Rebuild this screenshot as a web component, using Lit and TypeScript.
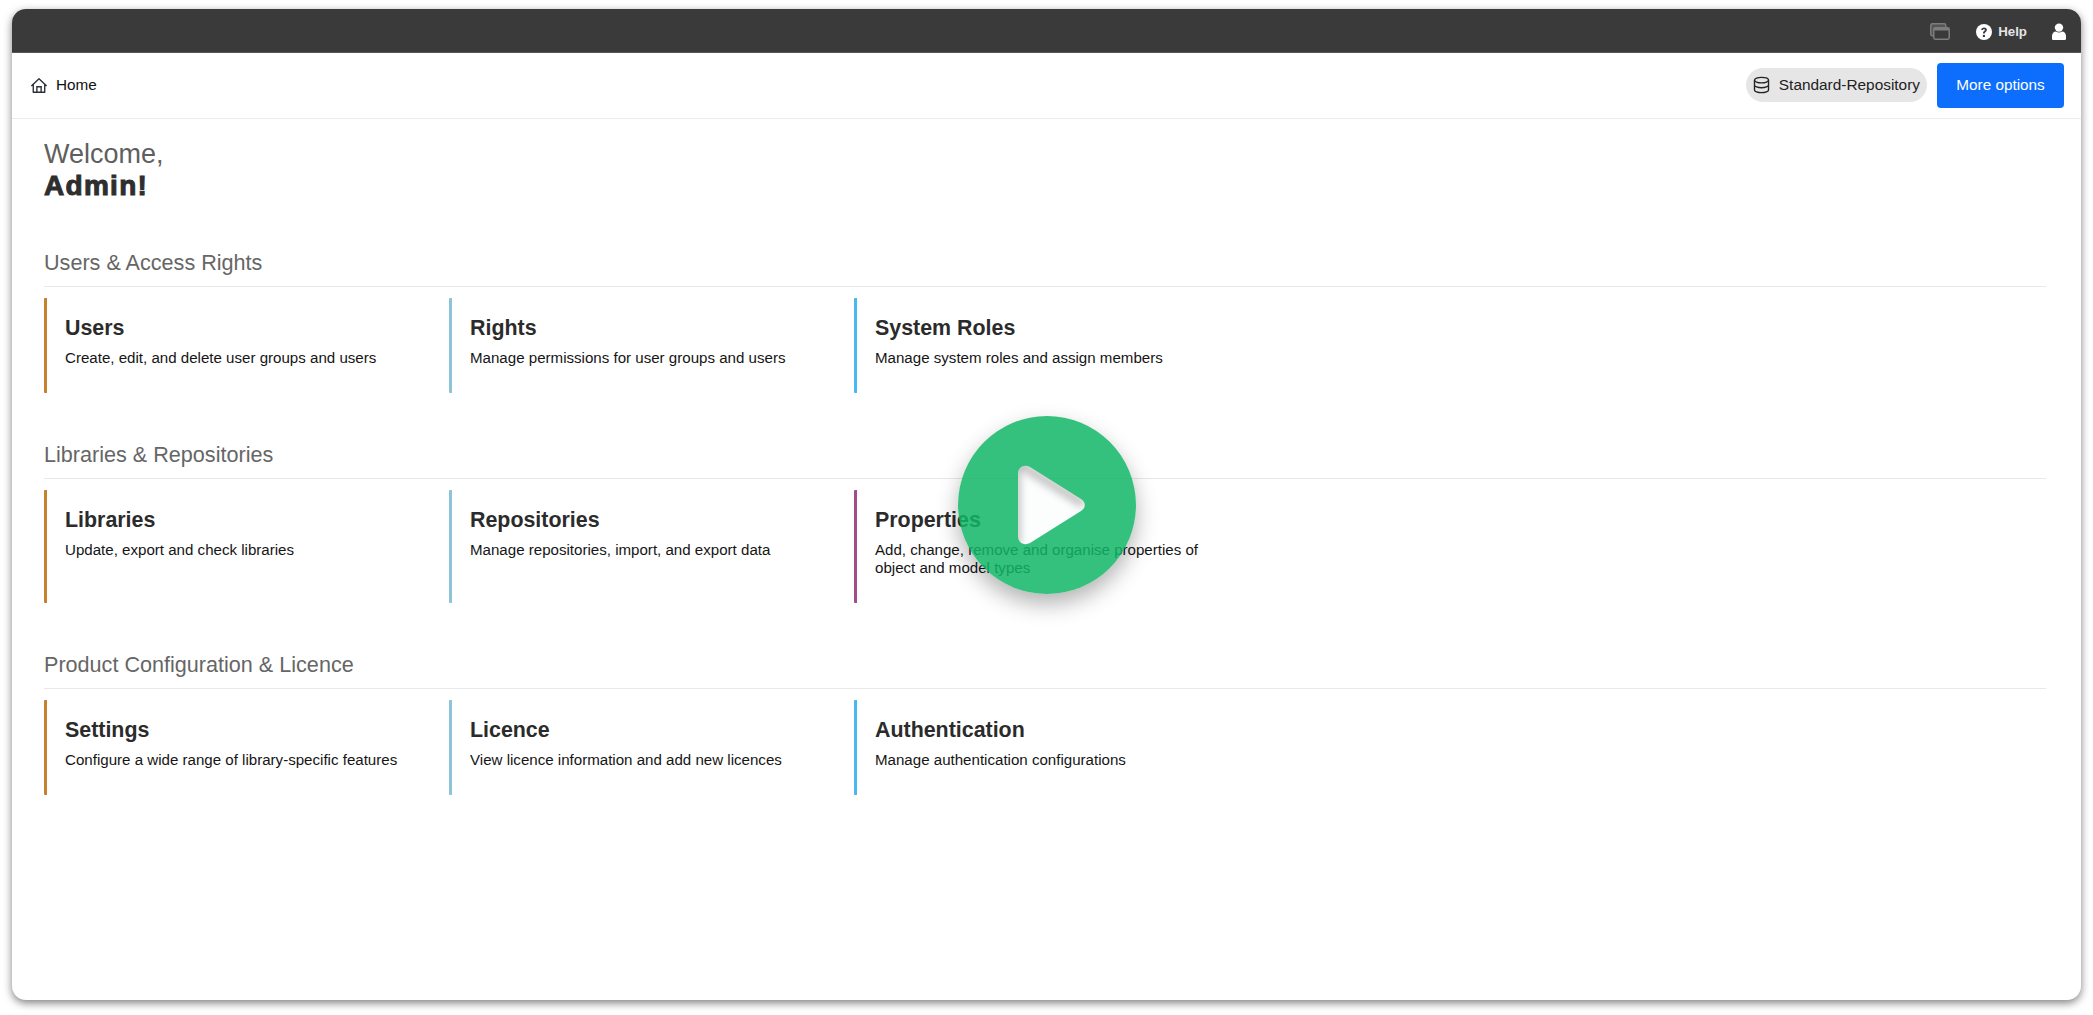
import { LitElement, css, html, svg } from 'lit';
import { customElement } from 'lit/decorators.js';

type Card = { title: string; text: string; color: string };
type Section = { heading: string; cards: Card[] };

const ORANGE = '#c6812f';
const TEAL = '#8cc6d6';
const BLUE = '#48b8f5';
const PURPLE = '#a34c8c';

const sections: Section[] = [
  {
    heading: 'Users & Access Rights',
    cards: [
      { title: 'Users', text: 'Create, edit, and delete user groups and users', color: ORANGE },
      { title: 'Rights', text: 'Manage permissions for user groups and users', color: TEAL },
      { title: 'System Roles', text: 'Manage system roles and assign members', color: BLUE },
    ],
  },
  {
    heading: 'Libraries & Repositories',
    cards: [
      { title: 'Libraries', text: 'Update, export and check libraries', color: ORANGE },
      { title: 'Repositories', text: 'Manage repositories, import, and export data', color: TEAL },
      { title: 'Properties', text: 'Add, change, remove and organise properties of object and model types', color: PURPLE },
    ],
  },
  {
    heading: 'Product Configuration & Licence',
    cards: [
      { title: 'Settings', text: 'Configure a wide range of library-specific features', color: ORANGE },
      { title: 'Licence', text: 'View licence information and add new licences', color: TEAL },
      { title: 'Authentication', text: 'Manage authentication configurations', color: BLUE },
    ],
  },
];

const homeIcon = svg`<path d="M.8 8.4 8 1.6l7.2 6.8M2.6 7v7.4h10.8V7" fill="none" stroke="currentColor" stroke-width="1.3" stroke-linejoin="round"/><path d="M6 14.4V9.2h4v5.2" fill="none" stroke="currentColor" stroke-width="1.3"/>`;
const dbIcon = svg`<ellipse cx="8" cy="3.4" rx="6.6" ry="2.6" fill="none" stroke="currentColor" stroke-width="1.3"/><path d="M1.4 3.4v9.2c0 1.4 3 2.6 6.6 2.6s6.6-1.2 6.6-2.6V3.4M1.4 8c0 1.4 3 2.6 6.6 2.6s6.6-1.2 6.6-2.6" fill="none" stroke="currentColor" stroke-width="1.3"/>`;
const windowsIcon = svg`<rect x=".8" y=".8" width="15" height="12" rx="1.6" fill="#555" stroke="currentColor" stroke-width="1.5"/><rect x="3.8" y="4.8" width="15.4" height="11.4" rx="1.4" fill="#3a3a3a" stroke="currentColor" stroke-width="1.5"/><path d="M4 5h15v2.4H4z" fill="currentColor"/>`;
const helpIcon = svg`<circle cx="8" cy="8" r="8" fill="currentColor"/><path d="M5.2 6.1c0-1.7 1.3-2.7 2.9-2.7s2.8 1 2.8 2.4c0 2-2.1 2-2.1 3.6H7c0-2.5 1.8-2.4 1.8-3.5 0-.5-.3-.8-.8-.8-.6 0-.9.4-.9 1Z" fill="#3a3a3a"/><circle cx="7.9" cy="11.9" r="1.2" fill="#3a3a3a"/>`;
const userIcon = svg`<circle cx="7" cy="4.6" r="4.2" fill="currentColor"/><path d="M0 15.4v-2.6C0 10.4 1.8 8.4 4 8.4c.9.6 1.9 1 3 1s2.1-.4 3-1c2.2 0 4 2 4 4.4v2.6c0 .9-.7 1.6-1.6 1.6H1.6C.7 17 0 16.3 0 15.4Z" fill="currentColor"/>`;

@customElement('app-root')
export class AppRoot extends LitElement {
  static styles = css`
    :host {
      display: block;
      box-sizing: border-box;
      height: 1015px;
      padding: 9px 12px 15px;
      background: #fff;
      font-family: 'Liberation Sans', Arial, sans-serif;
      position: relative;
      overflow: hidden;
    }

    .window {
      height: 100%;
      border-radius: 14px;
      background: #fff;
      overflow: hidden;
      box-shadow: 0 3px 8px rgba(0, 0, 0, 0.5);
      display: flex;
      flex-direction: column;
    }

    .topbar {
      height: 44px;
      flex: none;
      box-sizing: border-box;
      background: #3a3a3a;
      border-bottom: 1px solid #555;
      display: flex;
      align-items: center;
      justify-content: flex-end;
      color: #fff;
      padding: 2px 15px 0 0;
    }

    .topbar svg { display: block; }

    .windows { color: #7d7d7d; margin-right: 26px; }

    .help {
      display: flex;
      align-items: center;
      gap: 6px;
      font-size: 13.3px;
      font-weight: 700;
      margin-right: 25px;
      color: #e4e4e4;
    }

    .help svg { color: #fff; }

    .nav {
      height: 66px;
      flex: none;
      box-sizing: border-box;
      border-bottom: 1px solid #ececec;
      display: flex;
      align-items: center;
      padding: 0 17px 1px 18px;
    }

    .crumb {
      display: flex;
      align-items: center;
      gap: 8px;
      font-size: 15.3px;
      color: #111;
      flex: 1;
    }

    .crumb svg { color: #2a3038; }

    .repo {
      height: 34px;
      display: flex;
      align-items: center;
      gap: 9px;
      padding: 0 7px;
      border-radius: 17px;
      background: #e6e6e6;
      color: #222;
      font-size: 15.4px;
      margin-right: 10px;
    }

    .btn {
      width: 127px;
      height: 45px;
      border: none;
      border-radius: 4px;
      background: #0d6efd;
      color: #fff;
      font: 15.3px 'Liberation Sans', Arial, sans-serif;
    }

    .content {
      flex: 1;
      padding: 19px 35px 0 32px;
    }

    .welcome {
      font-size: 27px;
      line-height: 32px;
      color: #5f5f5f;
    }

    .admin {
      font-size: 28px;
      line-height: 32px;
      font-weight: 700;
      color: #2e2e2e;
      -webkit-text-stroke: 1px #2e2e2e;
      letter-spacing: 1.3px;
    }

    h2 {
      margin: 0;
      font-size: 21.6px;
      font-weight: 400;
      line-height: 24px;
      color: #666;
      padding: 1px 0 11px;
      border-bottom: 1px solid #e8e8e8;
    }

    section { margin-top: 49px; }
    section:first-of-type { margin-top: 48px; }

    .cards {
      display: grid;
      grid-template-columns: repeat(3, 405px);
      margin-top: 11px;
    }

    .card {
      border-left: 3px solid;
      border-radius: 1px;
      padding: 17px 40px 26px 18px;
    }

    .card h3 {
      margin: 0;
      font-size: 21.4px;
      line-height: 26px;
      font-weight: 700;
      color: #2b2b2b;
    }

    .card p {
      margin: 8px 0 0;
      font-size: 15.1px;
      line-height: 18px;
      color: #151515;
    }

    .play {
      position: absolute;
      left: 958px;
      top: 416px;
      width: 178px;
      height: 178px;
      border-radius: 50%;
      background: rgba(16, 181, 102, 0.85);
      box-shadow: 0 10px 22px rgba(0, 0, 0, 0.3);
    }

    .play svg {
      position: absolute;
      left: 0;
      top: 0;
      opacity: 0.99;
    }
  `;

  private icon(content: unknown, w: number, h: number, vb: string) {
    return html`<svg width=${w} height=${h} viewBox=${vb} aria-hidden="true">${content}</svg>`;
  }

  render() {
    return html`
      <div class="window">
        <div class="topbar">
          <span class="windows">${this.icon(windowsIcon, 20, 17, '0 0 20 17')}</span>
          <span class="help">${this.icon(helpIcon, 16, 16, '0 0 16 16')}Help</span>
          <span>${this.icon(userIcon, 14, 17, '0 0 14 17')}</span>
        </div>
        <div class="nav">
          <div class="crumb">${this.icon(homeIcon, 18, 17, '0 0 16 16')}Home</div>
          <div class="repo">${this.icon(dbIcon, 17, 18, '0 0 16 16')}Standard-Repository</div>
          <button class="btn">More options</button>
        </div>
        <div class="content">
          <div class="welcome">Welcome,</div>
          <div class="admin">Admin!</div>
          ${sections.map(
            (s) => html`
              <section>
                <h2>${s.heading}</h2>
                <div class="cards">
                  ${s.cards.map(
                    (c) => html`
                      <div class="card" style="border-left-color:${c.color}">
                        <h3>${c.title}</h3>
                        <p>${c.text}</p>
                      </div>
                    `,
                  )}
                </div>
              </section>
            `,
          )}
        </div>
      </div>
      <div class="play">
        <svg width="178" height="178" viewBox="0 0 178 178">
          <defs>
            <clipPath id="tri">
              <path d="M60 58c0-7 6-10 12-7l51 32c5 3 5 9 0 12l-51 32c-6 3-12 0-12-7Z" />
            </clipPath>
            <filter id="soft" x="-30%" y="-30%" width="160%" height="160%">
              <feGaussianBlur stdDeviation="4" />
            </filter>
          </defs>
          <g clip-path="url(#tri)">
            <rect x="50" y="40" width="90" height="100" fill="#fff" />
            <path d="M58 46l68 42M58 46v84" fill="none" stroke="#000" stroke-opacity="0.3" stroke-width="7" filter="url(#soft)" />
          </g>
        </svg>
      </div>
    `;
  }
}
